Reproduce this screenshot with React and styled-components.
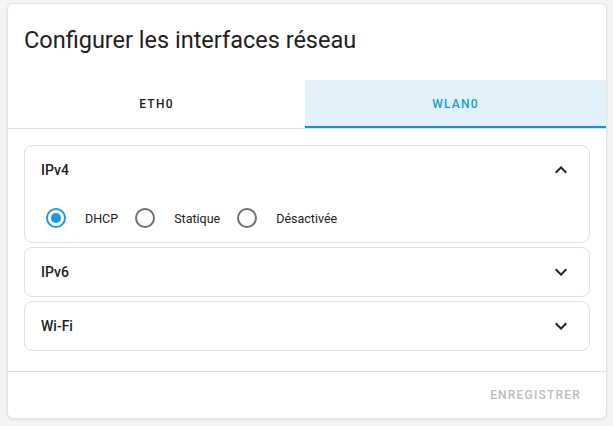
import React, { useState } from "react";
import styled, { createGlobalStyle } from "styled-components";

const GlobalStyle = createGlobalStyle`
  html, body {
    margin: 0;
    padding: 0;
    background: #f4f4f4;
    font-family: Roboto, "Noto Sans", sans-serif;
    color: #212121;
  }
  * { box-sizing: border-box; }
`;

const Page = styled.div`
  padding: 3px 6px 8px 7px;
`;

const Dialog = styled.div`
  width: 600px;
  background: #fff;
  border: 1px solid #e3e3e3;
  border-radius: 6px;
  box-shadow: 0 1px 3px rgba(0, 0, 0, 0.08);
  overflow: hidden;
`;

const Title = styled.h2`
  margin: 0;
  padding: 20px 16px 24px;
  font-size: 23.5px;
  line-height: 32px;
  font-weight: 400;
  color: #212121;
`;

const TabBar = styled.div`
  display: grid;
  grid-template-columns: 297px 1fr;
  border-bottom: 1px solid #e0e0e0;
`;

const Tab = styled.button`
  height: 48px;
  border: none;
  padding: 0;
  font-family: inherit;
  font-size: 12px;
  font-weight: 500;
  letter-spacing: 1.25px;
  text-transform: uppercase;
  cursor: pointer;
  background: ${(p) => (p.$active ? "#e1f2fb" : "transparent")};
  color: ${(p) => (p.$active ? "#1a9ad6" : "#212121")};
  box-shadow: ${(p) => (p.$active ? "inset 0 -2px 0 #1a8fd0" : "none")};
`;

const Body = styled.div`
  padding: 16px 16px 20px;
  display: flex;
  flex-direction: column;
  gap: 4px;
`;

const Panel = styled.div`
  border: 1px solid #e0e0e0;
  border-radius: 8px;
`;

const PanelHeader = styled.div`
  height: 48px;
  display: flex;
  align-items: center;
  justify-content: space-between;
  padding: 0 16px;
  font-size: 14px;
  font-weight: 500;
  color: #212121;
  cursor: pointer;
`;

const PanelContent = styled.div`
  padding: 4px 21px 4px;
  display: flex;
  align-items: center;
`;

const Option = styled.label`
  display: flex;
  align-items: center;
  height: 40px;
  cursor: pointer;
`;

const RadioBox = styled.span`
  width: 20px;
  height: 20px;
  border-radius: 50%;
  border: 2px solid ${(p) => (p.$checked ? "#1a9ad6" : "#6f6f6f")};
  display: flex;
  align-items: center;
  justify-content: center;
  margin-right: 19px;
  &::after {
    content: "";
    width: 10px;
    height: 10px;
    border-radius: 50%;
    background: ${(p) => (p.$checked ? "#1a9ad6" : "transparent")};
  }
`;

const OptionText = styled.span`
  font-size: 12.5px;
  color: #212121;
  padding-right: 17px;
`;

const Footer = styled.div`
  border-top: 1px solid #e0e0e0;
  display: flex;
  justify-content: flex-end;
  padding: 5px 25px 5px;
`;

const SaveButton = styled.button`
  height: 36px;
  border: none;
  background: transparent;
  padding: 0 0 0 8px;
  font-family: inherit;
  font-size: 12px;
  font-weight: 500;
  letter-spacing: 1.2px;
  text-transform: uppercase;
  color: #bdbdbd;
`;

const Chevron = ({ up }) => (
  <svg width="24" height="24" viewBox="0 0 24 24" fill="#212121">
    {up ? (
      <path d="M7.41,15.41L12,10.83L16.59,15.41L18,14L12,8L6,14L7.41,15.41Z" />
    ) : (
      <path d="M7.41,8.58L12,13.17L16.59,8.58L18,10L12,16L6,10L7.41,8.58Z" />
    )}
  </svg>
);

const modes = ["DHCP", "Statique", "Désactivée"];

export default function App() {
  const [tab, setTab] = useState("wlan0");
  const [mode, setMode] = useState("DHCP");

  return (
    <Page>
      <GlobalStyle />
      <Dialog>
        <Title>Configurer les interfaces réseau</Title>
        <TabBar>
          <Tab $active={tab === "eth0"} onClick={() => setTab("eth0")}>eth0</Tab>
          <Tab $active={tab === "wlan0"} onClick={() => setTab("wlan0")}>wlan0</Tab>
        </TabBar>
        <Body>
          <Panel>
            <PanelHeader>
              IPv4
              <Chevron up />
            </PanelHeader>
            <PanelContent>
              {modes.map((m) => (
                <Option key={m} onClick={() => setMode(m)}>
                  <RadioBox $checked={mode === m} />
                  <OptionText>{m}</OptionText>
                </Option>
              ))}
            </PanelContent>
          </Panel>
          <Panel>
            <PanelHeader>
              IPv6
              <Chevron />
            </PanelHeader>
          </Panel>
          <Panel>
            <PanelHeader>
              Wi-Fi
              <Chevron />
            </PanelHeader>
          </Panel>
        </Body>
        <Footer>
          <SaveButton disabled>Enregistrer</SaveButton>
        </Footer>
      </Dialog>
    </Page>
  );
}
